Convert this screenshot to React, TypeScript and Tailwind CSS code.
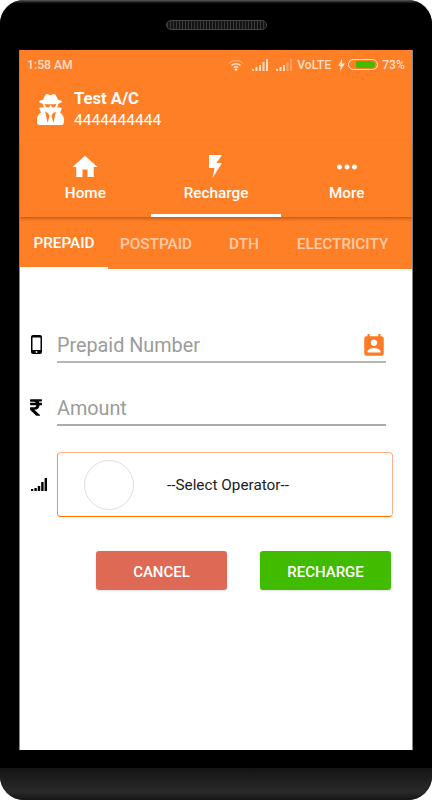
import React from "react";
import { FaRupeeSign, FaUserSecret } from "react-icons/fa";
import { MdHome, MdMoreHoriz, MdPermContactCalendar } from "react-icons/md";

const roboto = { fontFamily: "Roboto, sans-serif" };

function Signal({ weak = false }: { weak?: boolean }) {
  const bars = [
    [0, 10, 2, 2],
    [3.5, 8, 2, 4],
    [7, 6, 2, 6],
    [10.5, 3, 2, 9],
    [14, 0, 2, 12],
  ];
  return (
    <svg width="16" height="12" viewBox="0 0 16 12">
      {bars.map((b, i) => (
        <rect
          key={i}
          x={b[0]}
          y={b[1]}
          width={b[2]}
          height={b[3]}
          fill="#fff"
          opacity={weak && i > 2 ? 0.3 : 0.75}
        />
      ))}
    </svg>
  );
}

function StatusBar() {
  return (
    <div className="flex h-[27px] items-center justify-between pl-[7px] pr-[7px] pt-[3px] text-[12.2px] font-medium text-white/75">
      <span>1:58 AM</span>
      <div className="flex items-center">
        <svg width="16" height="12" viewBox="0 0 16 12" fill="none" stroke="#fff" strokeOpacity="0.75" className="mr-[8px]">
          <path d="M1 4.5C5 .5 11 .5 15 4.5" strokeWidth="1" strokeOpacity="0.45" />
          <path d="M3.5 6.5C6 4.2 10 4.2 12.5 6.5" strokeWidth="1.4" />
          <path d="M5.8 8.6C7 7.6 9 7.6 10.2 8.6" strokeWidth="1.4" />
          <circle cx="8" cy="10.6" r="1.2" fill="#fff" stroke="none" />
        </svg>
        <span className="mr-[8px]"><Signal /></span>
        <span className="mr-[5px]"><Signal weak /></span>
        <span className="mr-[7px]">VoLTE</span>
        <svg width="7" height="12" viewBox="0 0 7 12" className="mr-[3px]">
          <path d="M4 0 0 7h2.6L2 12l5-7.4H4.2z" fill="#fff" fillOpacity="0.75" />
        </svg>
        <div className="mr-[4px] flex h-[11px] w-[30px] items-center justify-end rounded-full border border-white/80 px-[2px]">
          <div className="h-[7px] w-[19px] rounded-r-full bg-[#43bb00]" />
        </div>
        <span>73%</span>
      </div>
    </div>
  );
}

function Account() {
  return (
    <div className="flex h-[64px] items-center pl-[17px] text-white">
      <FaUserSecret className="h-[31px] w-[27px]" />
      <div className="ml-[10px] flex flex-col">
        <span className="text-[16.6px] leading-[21px] font-bold">Test A/C</span>
        <span className="text-[15.5px] leading-[22px]">4444444444</span>
      </div>
    </div>
  );
}

function BoltIcon() {
  return (
    <svg width="13" height="23" viewBox="0 0 13 23" className="mt-[4px]">
      <path d="M0 0h13L7.5 8H13L3.5 23 5.5 13H0z" fill="#fff" />
    </svg>
  );
}

function MainTabs() {
  return (
    <div className="grid h-[76px] grid-cols-3 shadow-[0_2px_3px_rgba(120,60,10,0.45)]">
      <div className="flex flex-col items-center pt-[10px] text-white">
        <div className="flex h-[30px] items-center pt-[2px]"><MdHome size={30} /></div>
        <span className="mt-[1px] text-[15.3px] leading-[22px] font-medium">Home</span>
      </div>
      <div className="flex flex-col items-center border-b-[3px] border-white pt-[10px] text-white">
        <div className="flex h-[30px] items-start"><BoltIcon /></div>
        <span className="mt-[1px] text-[15.3px] leading-[22px] font-medium">Recharge</span>
      </div>
      <div className="flex flex-col items-center pt-[10px] text-white">
        <div className="flex h-[30px] items-center pt-[2px]"><MdMoreHoriz size={30} /></div>
        <span className="mt-[1px] text-[15.3px] leading-[22px] font-medium">More</span>
      </div>
    </div>
  );
}

function SubTabs() {
  return (
    <div className="flex h-[52px] text-[15.3px] font-medium text-white/60 shadow-[0_2px_3px_rgba(0,0,0,0.18)]">
      <div className="flex w-[88px] items-center justify-center border-b-2 border-white pt-[3px] text-white">PREPAID</div>
      <div className="flex w-[98px] items-center justify-center pb-[1px] pr-[2px] pt-[3px]">POSTPAID</div>
      <div className="flex w-[64px] items-center justify-center pb-[1px] pl-[12px] pt-[3px]">DTH</div>
      <div className="flex flex-1 items-center justify-center pb-[1px] pl-[3px] pt-[3px]">ELECTRICITY</div>
    </div>
  );
}

function PhoneIcon() {
  return (
    <svg width="11" height="19" viewBox="0 0 11 19" className="ml-[5px] mt-[5px]">
      <rect width="11" height="19" rx="2" fill="#000" />
      <rect x="1.5" y="2.5" width="8" height="12.5" fill="#fff" />
      <circle cx="5.5" cy="17" r="0.9" fill="#fff" />
    </svg>
  );
}

function Form() {
  return (
    <div className="flex flex-1 flex-col bg-white">
      <div className="mt-[61px] flex items-start pl-[6px]">
        <PhoneIcon />
        <div className="ml-[15px] flex h-[33px] w-[329px] items-center justify-between border-b-2 border-[#b5b5b5] pt-[1px]">
          <span className="text-[19.8px] text-[#9b9b9b]">Prepaid Number</span>
          <MdPermContactCalendar size={26} className="mr-[-1px] text-[#ff7a22]" />
        </div>
      </div>
      <div className="mt-[30px] flex items-start pl-[10px]">
        <FaRupeeSign className="mt-[5px] h-[19px] w-[12px] text-black" />
        <div className="ml-[15px] flex h-[33px] w-[329px] items-center border-b-2 border-[#ababab] pt-[1px]">
          <span className="text-[19.8px] text-[#9b9b9b]">Amount</span>
        </div>
      </div>
      <div className="mt-[26px] flex items-center pl-[11px]">
        <svg width="16" height="13" viewBox="0 0 16 13">
          <rect x="0" y="11" width="2.2" height="2" />
          <rect x="3.4" y="10" width="2.4" height="3" />
          <rect x="6.8" y="8" width="2.4" height="5" />
          <rect x="10.2" y="4" width="2.4" height="9" />
          <rect x="13.6" y="0" width="2.4" height="13" />
        </svg>
        <div className="ml-[10px] flex h-[65px] w-[336px] items-center rounded-[4px] border border-t-[#ffb08a] border-r-[#ffb08a] border-b-[#ff6f00] border-l-[#ff8a4a] pl-[26px]">
          <div className="h-[50px] w-[50px] rounded-full border border-[#dedede]" />
          <span className="ml-[33px] pt-[2px] text-[15.3px] text-[#1c1c1c]">--Select Operator--</span>
        </div>
      </div>
      <div className="mt-[34px] flex pl-[76px]">
        <button className="h-[39px] w-[131px] rounded-[3px] bg-[#de6955] pt-[3px] text-[15px] font-medium text-white shadow-sm">CANCEL</button>
        <button className="ml-[33px] h-[39px] w-[131px] rounded-[3px] bg-[#40bb00] pt-[3px] text-[15px] font-medium text-white shadow-sm">RECHARGE</button>
      </div>
    </div>
  );
}

export default function App() {
  return (
    <div className="h-[800px] w-[432px] bg-white" style={roboto}>
      <div className="flex h-full flex-col overflow-hidden rounded-[24px] bg-black">
        <div className="flex h-[50px] justify-center bg-gradient-to-b from-[#5a5a5a] via-black via-[9%] to-black pt-[20px]">
          <div className="h-[10px] w-[101px] rounded-full border border-[#444] bg-[repeating-linear-gradient(90deg,#383838_0,#383838_1px,#141414_1px,#141414_3px)]" />
        </div>
        <div className="mx-[19px] flex h-[700px] flex-col border-x border-[#8a8a8a]">
          <div className="bg-[#ff7f27]">
            <StatusBar />
            <Account />
            <MainTabs />
            <SubTabs />
          </div>
          <Form />
        </div>
        <div className="mt-[18px] flex-1 bg-gradient-to-b from-[#141414] via-[#2a2a2a] via-[75%] to-[#161616]" />
      </div>
    </div>
  );
}
